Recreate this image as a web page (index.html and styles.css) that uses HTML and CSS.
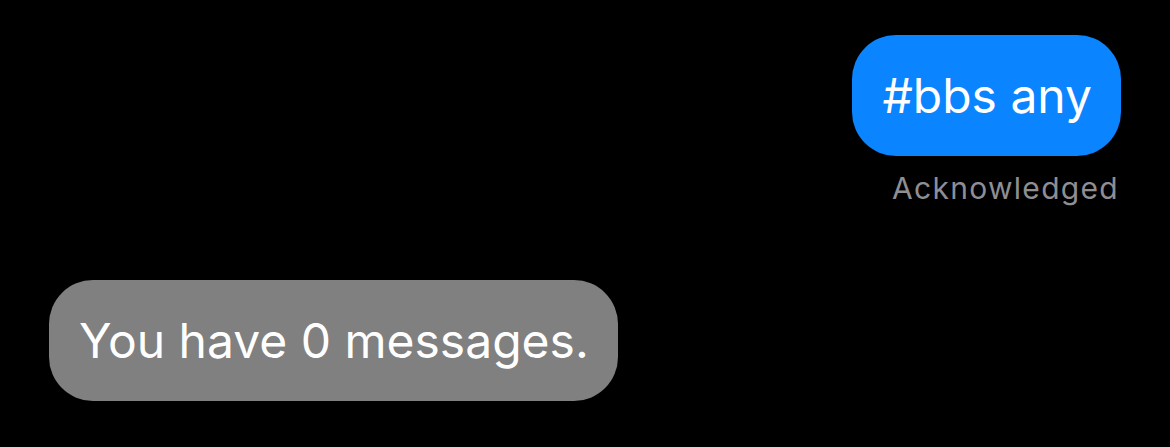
FILE: index.html
```html
<!DOCTYPE html>
<html>
<head>
<meta charset="utf-8">
<link rel="stylesheet" href="styles.css">
</head>
<body>
<div class="chat">
  <div class="row out">
    <div class="bubble blue">#bbs any</div>
    <div class="status">Acknowledged</div>
  </div>
  <div class="row in">
    <div class="bubble gray">You have 0 messages.</div>
  </div>
</div>
</body>
</html>
```
FILE: styles.css
```css
html, body {
  margin: 0;
  padding: 0;
  background: #000;
}
body {
  width: 1170px;
  height: 447px;
  overflow: hidden;
  font-family: Inter, "Liberation Sans", sans-serif;
}
.chat {
  display: flex;
  flex-direction: column;
  padding: 35px 49px 0 49px;
}
.row {
  display: flex;
  flex-direction: column;
}
.row.out {
  align-items: flex-end;
}
.row.in {
  align-items: flex-start;
  margin-top: 74px;
}
.bubble {
  color: #fff;
  font-size: 48px;
  line-height: 57px;
  padding: 32px 29px 32px 30px;
  border-radius: 44px;
  white-space: nowrap;
}
.blue {
  background: #0a84ff;
}
.gray {
  background: #808080;
}
.status {
  color: #8e8e93;
  font-size: 30px;
  line-height: 36px;
  margin-top: 14px;
  margin-right: 2px;
  letter-spacing: 1.3px;
}
```
